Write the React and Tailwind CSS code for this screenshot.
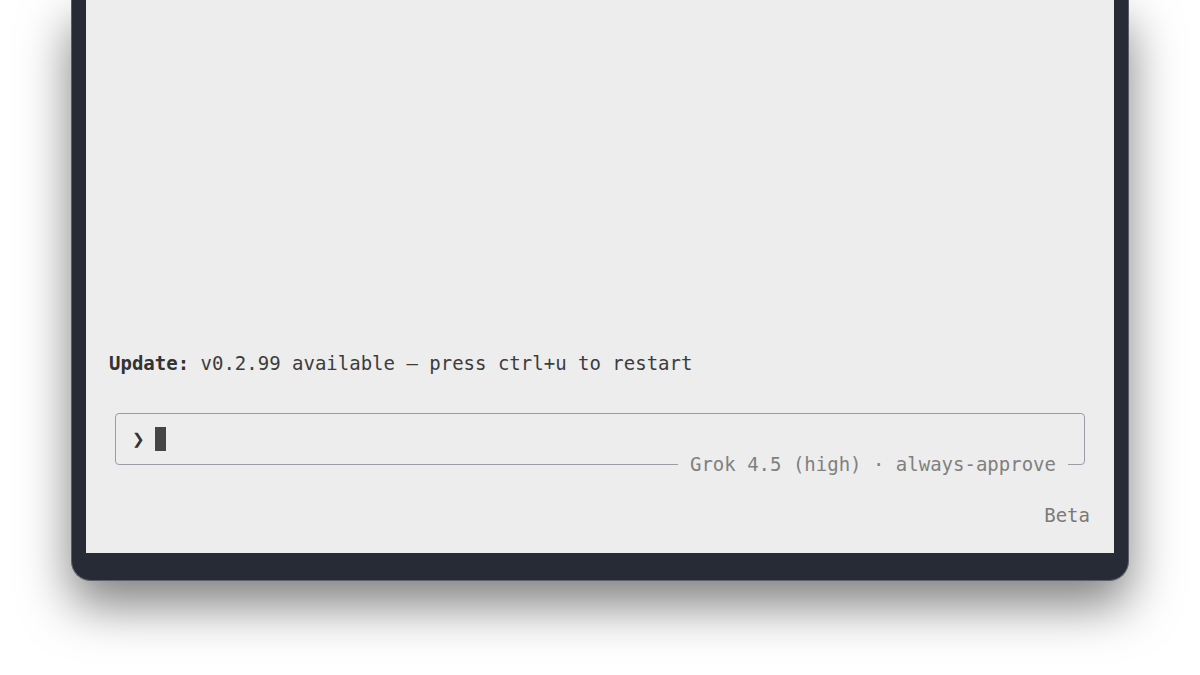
import React from "react";

export default function App() {
  const mono = { fontFamily: '"DejaVu Sans Mono", "Liberation Mono", monospace' };
  return (
    <div className="w-[1200px] h-[675px] bg-white overflow-hidden" style={mono}>
      <div className="ml-[71px] w-[1058px] h-[581px] bg-[#272b35] rounded-b-[20px] border-x border-b border-[#5a5f6b] px-[14px] pb-[27px] shadow-[0_24px_50px_rgba(0,0,0,0.5)]">
        <div className="h-full bg-[#ededed] flex flex-col justify-end pb-[26px]">
          <div className="pl-[23px] text-[19px] leading-[24px] text-[#3c3c3c] whitespace-pre translate-y-[1px]">
            <span className="font-bold text-[#333]">Update:</span> v0.2.99 available — press ctrl+u to restart
          </div>
          <div className="mx-[29px] mt-[39px] relative h-[52px] border border-[#9b9ca6] rounded-[4px] flex items-center pl-[16px]">
            <span className="text-[15px] font-bold text-[#333] leading-none" style={{ fontFamily: '"DejaVu Sans", sans-serif' }}>❯</span>
            <span className="ml-[10px] w-[11px] h-[24px] bg-[#454545]" />
            <div className="absolute right-[16px] top-full -translate-y-1/2 bg-[#ededed] px-[12px] text-[19px] leading-[24px] text-[#808080] whitespace-pre">
              Grok 4.5 (high) · always-approve
            </div>
          </div>
          <div className="mt-[38px] pr-[24px] text-right text-[19px] leading-[24px] text-[#7a7a7a]">
            Beta
          </div>
        </div>
      </div>
    </div>
  );
}
